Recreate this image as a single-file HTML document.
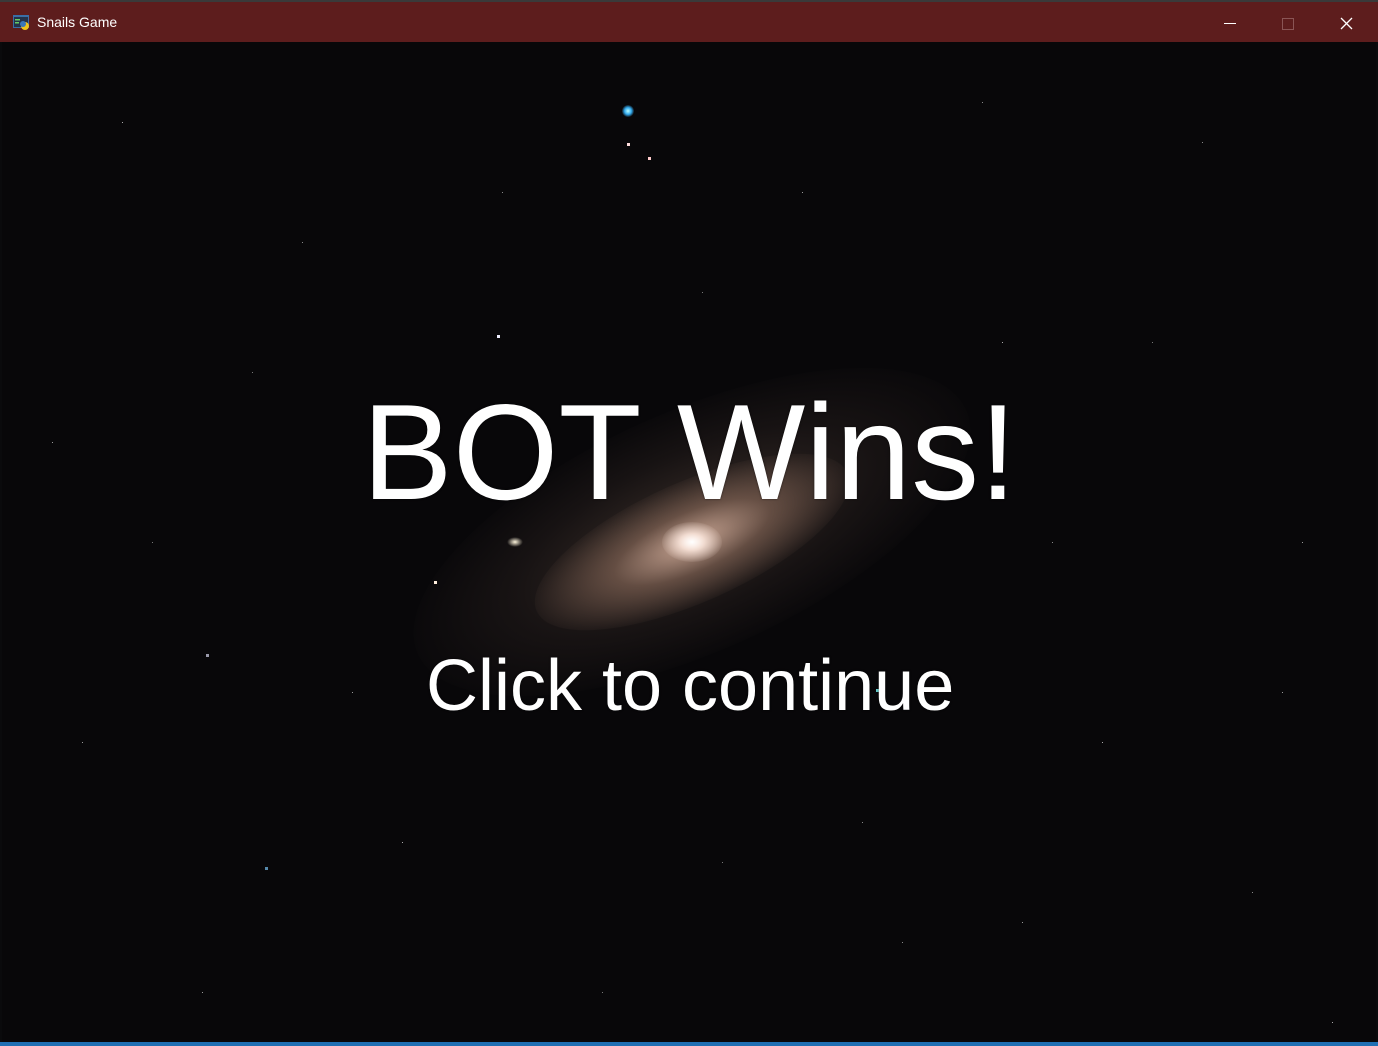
<!DOCTYPE html>
<html><head><meta charset="utf-8"><style>
html,body{margin:0;padding:0;width:1378px;height:1046px;overflow:hidden;background:#0a0a0c;font-family:"Liberation Sans",sans-serif}
#tb{position:absolute;left:0;top:0;width:1378px;height:42px;background:#5d1d1d;border-top:2px solid #3a3a3a;box-sizing:border-box}
#tb .t{position:absolute;left:37px;top:12px;color:#fff;font-size:14px}
#ic{position:absolute;left:13px;top:12px;width:18px;height:18px}
#c{position:absolute;left:2px;top:42px;width:1374px;height:1000px;overflow:hidden;
background:
radial-gradient(ellipse 14px 10px at 690px 500px,#fff 0%,rgba(255,240,230,.9) 40%,rgba(255,220,200,0) 100%),
#080709;}
#bot{position:absolute;left:0;top:1042px;width:1378px;height:4px;background:#1f6fb3}
.g{position:absolute;border-radius:50%}
.st{position:absolute;width:1px;height:1px;background:transparent}
.txt{position:absolute;color:#fff;white-space:nowrap;text-shadow:0 0 2px rgba(0,0,0,.6)}
</style></head><body>
<div id="tb">
<svg id="ic" viewBox="0 0 18 18"><rect x="0" y="1" width="16" height="13" fill="#3a6ea5"/><rect x="1" y="3" width="14" height="10" fill="#23324a"/><rect x="2" y="5" width="5" height="1.5" fill="#6c6"/><rect x="2" y="8" width="4" height="1.5" fill="#6c6"/><circle cx="12" cy="12" r="4" fill="#f0c419"/><circle cx="10" cy="10" r="3" fill="#3b77b8"/></svg>
<div class="t">Snails Game</div>
<div style="position:absolute;left:1224px;top:21px;width:12px;height:1px;background:#fff"></div>
<div style="position:absolute;left:1282px;top:16px;width:10px;height:10px;border:1px solid #8a5555"></div>
<svg style="position:absolute;left:1340px;top:15px" width="13" height="13" viewBox="0 0 13 13"><path d="M1 1L12 12M12 1L1 12" stroke="#fff" stroke-width="1.3"/></svg>
</div>
<div id="c">
<div class="g" style="left:390px;top:370px;width:600px;height:240px;transform:rotate(-24deg);background:radial-gradient(ellipse at center,rgba(120,95,80,.45) 0%,rgba(70,55,50,.25) 45%,rgba(20,18,20,0) 75%)"></div>
<div class="g" style="left:520px;top:440px;width:340px;height:120px;transform:rotate(-24deg);background:radial-gradient(ellipse at center,rgba(230,190,170,.8) 0%,rgba(170,130,110,.45) 35%,rgba(80,60,50,0) 75%)"></div>
<div class="g" style="left:660px;top:480px;width:60px;height:40px;background:radial-gradient(ellipse at center,#fff 0%,rgba(255,235,225,.8) 30%,rgba(255,220,200,0) 75%)"></div>
<div class="g" style="left:505px;top:495px;width:16px;height:10px;background:radial-gradient(#fff6dd,rgba(255,220,160,0) 70%)"></div>
<div class="g" style="left:620px;top:63px;width:12px;height:12px;background:radial-gradient(#bff,#3ae 40%,rgba(30,150,230,0) 75%)"></div>
<div class="st" style="box-shadow:626px 102px 0 1px #fdd,647px 116px 0 1px #fcc,496px 294px 0 1px #eef,433px 540px 0 1px #fed,205px 613px 0 1px #99a,264px 826px 0 1px #58a,875px 648px 0 1px #6cc,120px 80px #aaa,300px 200px #888,800px 150px #999,1000px 300px #aaa,1200px 100px #888,1300px 500px #999,1100px 700px #aaa,900px 900px #888,200px 950px #999,400px 800px #aaa,600px 950px #777,1250px 850px #888,50px 400px #999,150px 500px #777,1050px 500px #888,700px 250px #777,350px 650px #999,1330px 980px #aaa,980px 60px #888,80px 700px #999,1150px 300px #777,500px 150px #888,1280px 650px #999,860px 780px #888,250px 330px #777,1020px 880px #999,720px 820px #777"></div>
<div class="txt" style="left:360px;top:342px;font-size:136px;line-height:136px">BOT Wins!</div>
<div class="txt" style="left:424px;top:608px;font-size:72px;line-height:72px">Click to continue</div>
</div>
<div id="bot"></div>
</body></html>
